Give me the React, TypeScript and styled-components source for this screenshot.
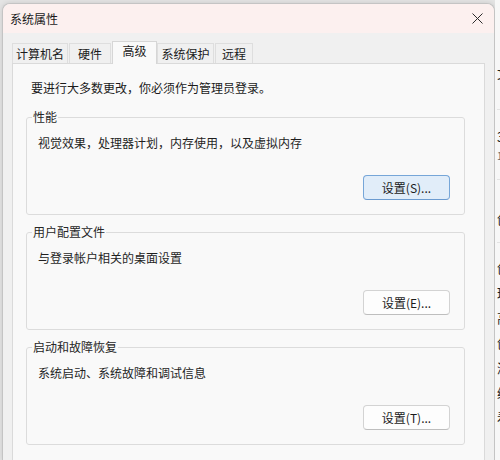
import React from 'react';
import styled, { createGlobalStyle } from 'styled-components';

const GlobalStyle = createGlobalStyle`
  html, body { margin: 0; padding: 0; }
  body {
    font-family: "Noto Sans CJK SC", "Noto Sans", "Liberation Sans", sans-serif;
    font-size: 12px;
    color: #1b1b1b;
    background: #e4e4e4;
  }
`;

const Screen = styled.div`
  display: flex;
  width: 500px;
  height: 460px;
  overflow: hidden;
  background: #e4e4e4;
`;

const Dialog = styled.div`
  flex: none;
  width: 493px;
  margin: 3px 0 0 2px;
  display: flex;
  flex-direction: column;
  box-sizing: border-box;
  background: #f0f0f0;
  border: 1px solid #c4c4c4;
  border-bottom: none;
  border-radius: 8px 8px 0 0;
  overflow: hidden;
  box-shadow: 0 0 5px rgba(0, 0, 0, 0.12);
`;

const TitleBar = styled.div`
  height: 29px;
  display: flex;
  align-items: center;
  justify-content: space-between;
  padding: 0 11px 0 7px;
  background: #fcf0ef;
`;

const Title = styled.span`
  font-size: 12px;
  line-height: 16px;
  color: #1a1a1a;
`;

const CloseButton = styled.span`
  display: flex;
  align-items: center;
  justify-content: center;
  width: 12px;
  height: 12px;
`;

const TabStrip = styled.div`
  display: flex;
  align-items: flex-end;
  height: 30px;
  padding-left: 9px;
`;

const Tab = styled.div<{ $w: number; $active?: boolean }>`
  box-sizing: border-box;
  width: ${(p) => p.$w}px;
  height: ${(p) => (p.$active ? 23 : 20)}px;
  display: flex;
  align-items: ${(p) => (p.$active ? 'flex-start' : 'center')};
  padding-top: ${(p) => (p.$active ? 1 : 0)}px;
  justify-content: center;
  font-size: 12px;
  line-height: 16px;
  color: #1b1b1b;
  background: ${(p) => (p.$active ? '#f9f9f9' : '#f0f0f0')};
  border: 1px solid ${(p) => (p.$active ? '#d6d6d6' : '#dedede')};
  border-bottom: none;
  margin-bottom: ${(p) => (p.$active ? -1 : 0)}px;
  margin-right: ${(p) => (p.$active ? 0 : 1)}px;
  position: ${(p) => (p.$active ? 'relative' : 'static')};
  z-index: ${(p) => (p.$active ? 1 : 0)};
`;

const Panel = styled.div`
  flex: 1;
  margin: 0 9px 0 9px;
  padding: 16px 19px 0 13px;
  background: #f9f9f9;
  border: 1px solid #dadada;
  border-bottom: none;
  display: flex;
  flex-direction: column;
`;

const Intro = styled.div`
  line-height: 16px;
  margin-left: 5px;
  margin-bottom: 13px;
`;

const Groups = styled.div`
  display: flex;
  flex-direction: column;
  gap: 9px;
`;

const Group = styled.fieldset`
  margin: 0;
  min-width: 0;
  padding: 0 14px 14px 11px;
  border: 1px solid #dcdcdc;
  border-radius: 3px;
`;

const Legend = styled.legend`
  padding: 0 1px;
  margin-left: -6px;
  line-height: 16px;
  font-size: 12px;
  color: #262626;
`;

const Desc = styled.div`
  margin-top: 10px;
  line-height: 16px;
  color: #1f1f1f;
`;

const ButtonRow = styled.div`
  display: flex;
  justify-content: flex-end;
  margin-top: 24px;
`;

const Button = styled.button<{ $default?: boolean }>`
  box-sizing: border-box;
  width: 87px;
  height: 25px;
  padding: 0;
  font-family: inherit;
  font-size: 12px;
  color: #1b1b1b;
  border-radius: 4px;
  background: ${(p) => (p.$default ? '#e1edf9' : '#fdfdfd')};
  border: 1px solid ${(p) => (p.$default ? '#76a6d8' : '#d3d3d3')};
  border-bottom-color: ${(p) => (p.$default ? '#6b9bd0' : '#bebebe')};
`;

const BgStrip = styled.div`
  flex: 1;
  background: #f7f7f7;
  display: flex;
  flex-direction: column;
  padding-left: 2px;
  overflow: hidden;
`;

const BgRow = styled.div<{ $h: number; $pt: number; $line?: boolean }>`
  box-sizing: border-box;
  height: ${(p) => p.$h}px;
  padding-top: ${(p) => p.$pt}px;
  border-bottom: ${(p) => (p.$line ? '1px solid #e3e3e3' : 'none')};
  display: flex;
  flex-direction: column;
`;

const BgChar = styled.span<{ $small?: boolean }>`
  font-size: ${(p) => (p.$small ? 10 : 13)}px;
  line-height: ${(p) => (p.$small ? 14 : 25)}px;
  color: ${(p) => (p.$small ? '#666' : '#222')};
  white-space: nowrap;
`;

const tabs = [
  { label: '计算机名', w: 56 },
  { label: '硬件', w: 42 },
  { label: '高级', w: 45, active: true },
  { label: '系统保护', w: 57 },
  { label: '远程', w: 38 },
];

const groups = [
  { title: '性能', desc: '视觉效果，处理器计划，内存使用，以及虚拟内存', btn: '设置(S)...', def: true },
  { title: '用户配置文件', desc: '与登录帐户相关的桌面设置', btn: '设置(E)...' },
  { title: '启动和故障恢复', desc: '系统启动、系统故障和调试信息', btn: '设置(T)...' },
];

export default function App() {
  return (
    <>
      <GlobalStyle />
      <Screen>
        <Dialog>
          <TitleBar>
            <Title>系统属性</Title>
            <CloseButton>
              <svg width="11" height="11" viewBox="0 0 11 11">
                <path d="M0.5 0.5 L10.5 10.5 M10.5 0.5 L0.5 10.5" stroke="#2b2b2b" strokeWidth="1" fill="none" />
              </svg>
            </CloseButton>
          </TitleBar>
          <TabStrip>
            {tabs.map((t) => (
              <Tab key={t.label} $w={t.w} $active={t.active}>
                {t.label}
              </Tab>
            ))}
          </TabStrip>
          <Panel>
            <Intro>要进行大多数更改，你必须作为管理员登录。</Intro>
            <Groups>
              {groups.map((g) => (
                <Group key={g.title}>
                  <Legend>{g.title}</Legend>
                  <Desc>{g.desc}</Desc>
                  <ButtonRow>
                    <Button $default={g.def}>{g.btn}</Button>
                  </ButtonRow>
                </Group>
              ))}
            </Groups>
          </Panel>
        </Dialog>
        <BgStrip>
          <BgRow $h={110} $pt={60} $line>
            <BgChar>文</BgChar>
          </BgRow>
          <BgRow $h={70} $pt={14} $line>
            <BgChar>3</BgChar>
            <BgChar $small>1</BgChar>
          </BgRow>
          <BgRow $h={63} $pt={26} $line>
            <BgChar>创</BgChar>
          </BgRow>
          <BgRow $h={200} $pt={12}>
            <BgChar>创</BgChar>
            <BgChar>环</BgChar>
            <BgChar>高</BgChar>
            <BgChar>创</BgChar>
            <BgChar>滋</BgChar>
            <BgChar>编</BgChar>
            <BgChar>看</BgChar>
          </BgRow>
        </BgStrip>
      </Screen>
    </>
  );
}
